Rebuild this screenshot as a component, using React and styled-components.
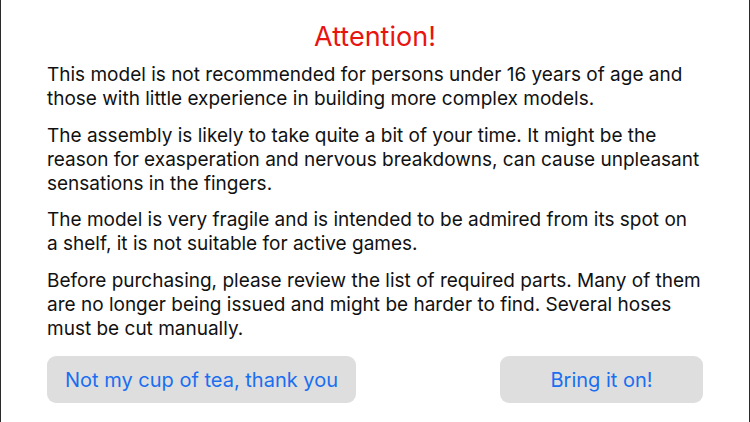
import styled, { createGlobalStyle } from 'styled-components'

const Global = createGlobalStyle`
  html, body {
    margin: 0;
    padding: 0;
    background: #ffffff;
  }
`

const Screen = styled.div`
  width: 750px;
  height: 422px;
  box-sizing: border-box;
  border-left: 1px solid #2a2a2a;
  border-right: 1px solid #2a2a2a;
  background: #ffffff;
  font-family: Inter, "Liberation Sans", sans-serif;
  padding: 20px 46px 0 46px;
  display: flex;
  flex-direction: column;
`

const Title = styled.h1`
  margin: 0 0 9px 0;
  text-align: center;
  font-size: 27px;
  line-height: 34px;
  font-weight: 400;
  color: #e8140f;
`

const Paragraph = styled.p`
  margin: 0 0 12.5px 0;
  font-size: 19px;
  line-height: 24px;
  color: #111111;
`

const Actions = styled.div`
  display: flex;
  justify-content: space-between;
  margin-top: 3px;
`

const Button = styled.button`
  width: ${p => p.$width}px;
  height: 47px;
  border: none;
  border-radius: 9px;
  background: #dedede;
  color: #1a6ef0;
  font-family: Inter, "Liberation Sans", sans-serif;
  font-size: 20px;
`

export default function App() {
  return (
    <>
      <Global />
      <Screen>
        <Title>Attention!</Title>
        <Paragraph>
          This model is not recommended for persons under 16 years of age and
          those with little experience in building more complex models.
        </Paragraph>
        <Paragraph>
          The assembly is likely to take quite a bit of your time. It might be the
          reason for exasperation and nervous breakdowns, can cause unpleasant
          sensations in the fingers.
        </Paragraph>
        <Paragraph>
          The model is very fragile and is intended to be admired from its spot on
          a shelf, it is not suitable for active games.
        </Paragraph>
        <Paragraph>
          Before purchasing, please review the list of required parts. Many of them
          are no longer being issued and might be harder to find. Several hoses
          must be cut manually.
        </Paragraph>
        <Actions>
          <Button $width={309}>Not my cup of tea, thank you</Button>
          <Button $width={203}>Bring it on!</Button>
        </Actions>
      </Screen>
    </>
  )
}
